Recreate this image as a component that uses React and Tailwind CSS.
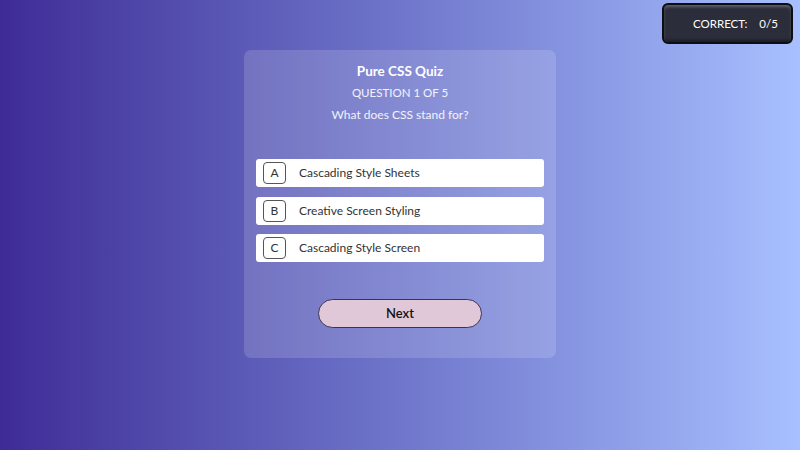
import React, { useState } from "react";

const options = [
  { key: "A", label: "Cascading Style Sheets" },
  { key: "B", label: "Creative Screen Styling" },
  { key: "C", label: "Cascading Style Screen" },
];

function ScoreBadge({ correct, total }) {
  return (
    <div className="absolute top-[3px] right-[7px] flex h-[41px] w-[131px] items-center gap-[12px] rounded-[6px] border-2 border-[#0d0e14] bg-[#2b2d3b] pl-[29px] text-[11.5px] text-white shadow-[inset_0_2px_3px_rgba(255,255,255,0.25),inset_0_-2px_3px_rgba(0,0,0,0.4)]">
      <span>CORRECT:</span>
      <span>
        {correct}/{total}
      </span>
    </div>
  );
}

export default function App() {
  const [selected, setSelected] = useState(null);

  return (
    <div
      className="relative flex h-[450px] w-[800px] justify-center overflow-hidden bg-linear-to-r from-[#3f2b96] to-[#a8c0ff] pt-[50px]"
      style={{ fontFamily: "Lato, 'Noto Sans', sans-serif" }}
    >
      <ScoreBadge correct={0} total={5} />

      {/* QUIZ CARD */}
      <div className="flex h-[308px] w-[312px] flex-col items-center rounded-[7px] bg-white/15 px-3 pt-[10px]">
        <h1 className="text-[13.5px] leading-[22px] font-bold text-white">Pure CSS Quiz</h1>
        <p className="text-[11.5px] leading-[22px] text-white/90">QUESTION 1 OF 5</p>
        <p className="text-[12px] leading-[22px] text-white/90">What does CSS stand for?</p>

        <ul className="mt-[33px] flex w-full flex-col gap-[9.5px]">
          {options.map((opt) => (
            <li key={opt.key}>
              <button
                type="button"
                onClick={() => setSelected(opt.key)}
                className="flex h-[28px] w-full items-center rounded-[3px] bg-white pl-[7px] text-left text-[12px] text-[#333]"
              >
                <span className="flex h-[22px] w-[23px] items-center justify-center rounded-[4px] border border-[#555]">
                  {opt.key}
                </span>
                <span className="ml-[13px]">{opt.label}</span>
              </button>
            </li>
          ))}
        </ul>

        <button
          type="button"
          className="mt-[37px] h-[29px] w-[164px] rounded-full border border-[#3b3352] bg-[#e1c8d8] text-[13px] font-semibold text-[#111]"
        >
          Next
        </button>
      </div>
    </div>
  );
}
